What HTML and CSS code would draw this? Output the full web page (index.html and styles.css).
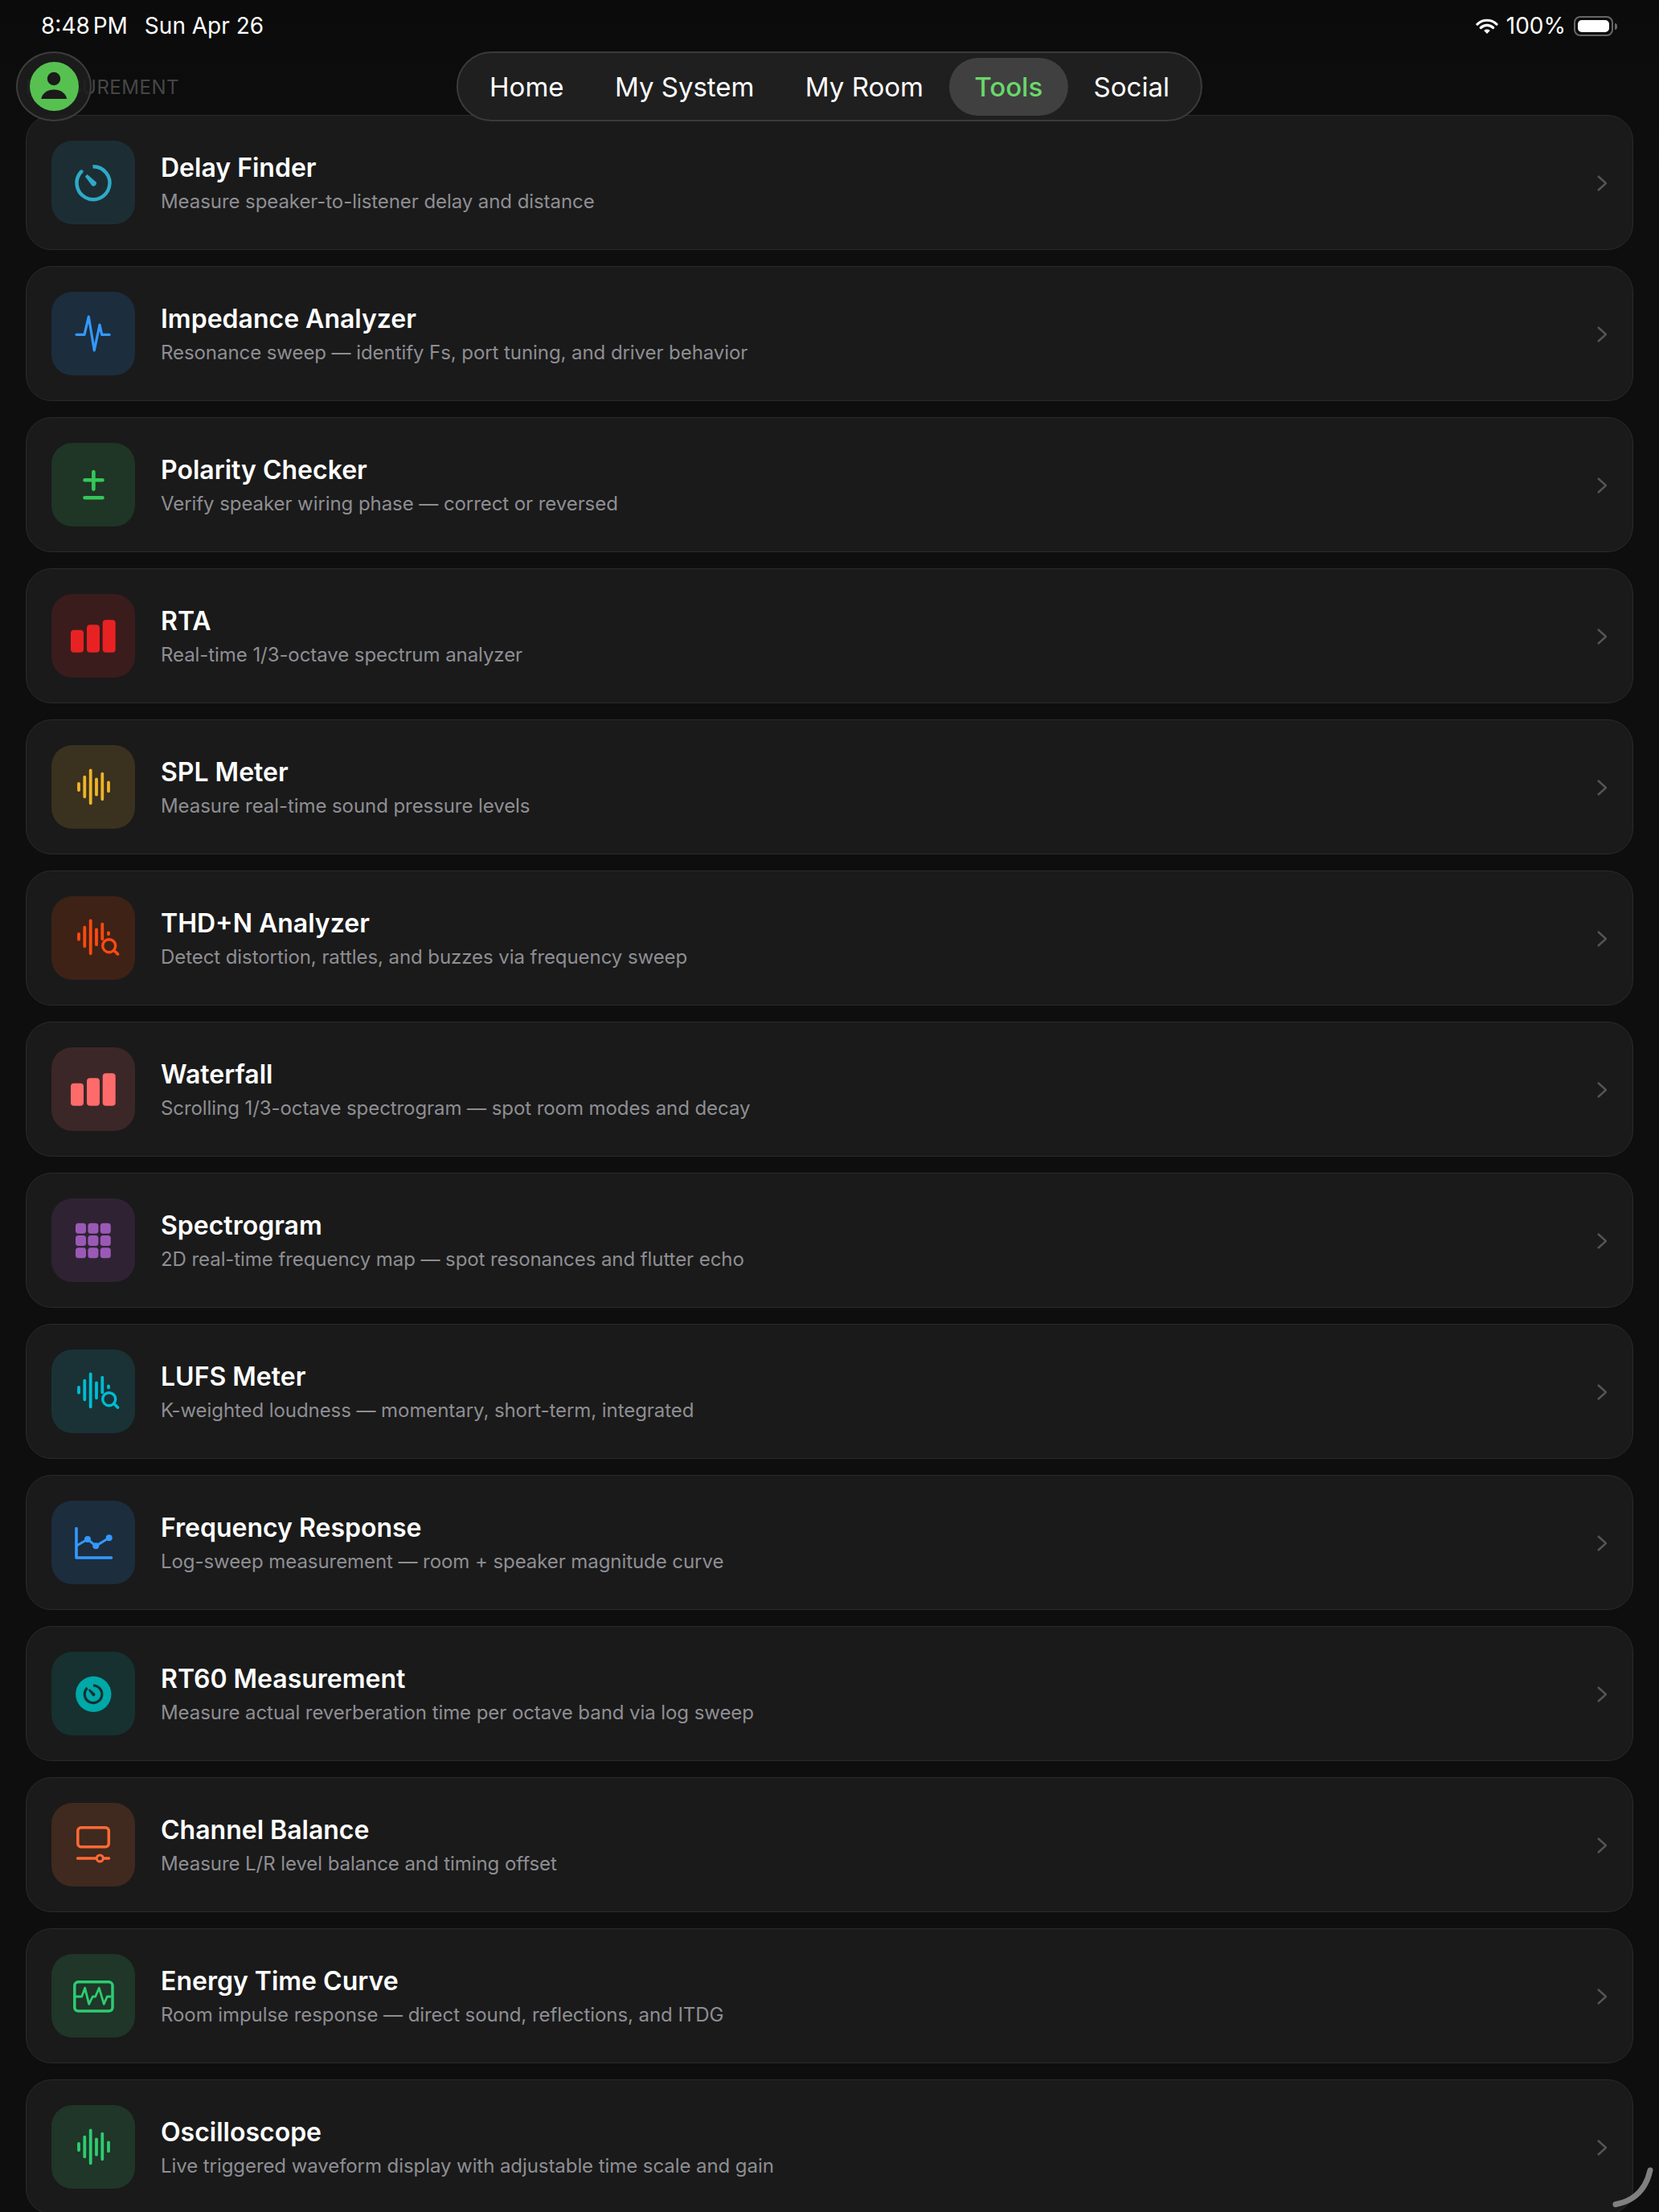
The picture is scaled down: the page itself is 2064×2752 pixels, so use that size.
FILE: index.html
```html
<!DOCTYPE html>
<html lang="en">
<head>
    <meta charset="UTF-8">
    <meta name="viewport" content="width=device-width, initial-scale=1.0">
    <title>Tools</title>
    <link rel="stylesheet" href="styles.css">
</head>
<body>
    <!-- shared icon shapes -->
    <svg class="icon-defs" aria-hidden="true">
        <symbol id="icon-bars" viewBox="0 0 104 104">
            <rect x="24" y="44.7" width="16" height="28" rx="4" fill="currentColor"/>
            <rect x="44" y="38.3" width="16" height="34.4" rx="4" fill="currentColor"/>
            <rect x="63.7" y="32.3" width="16" height="40.4" rx="4" fill="currentColor"/>
        </symbol>
        <symbol id="icon-wave" viewBox="0 0 104 104">
            <path d="M34 48v8M41.3 39.7v24.6M48.7 31.3v41M56 42.3v19.4M63.3 35.7v31.6M71 46.3v11" fill="none" stroke="currentColor" stroke-width="3.8" stroke-linecap="round"/>
        </symbol>
        <symbol id="icon-wave-search" viewBox="0 0 104 104">
            <path d="M34 47v6.7M41.3 38.7v23.6M48.7 30.3v41M56 41.3v19M63.3 34.7v18.6M71 45.3v2" fill="none" stroke="currentColor" stroke-width="3.8" stroke-linecap="round"/>
            <circle cx="71.7" cy="61.7" r="8" fill="none" stroke="currentColor" stroke-width="3.4"/>
            <path d="M77.6 67.3l5 4.8" fill="none" stroke="currentColor" stroke-width="3.6" stroke-linecap="round"/>
        </symbol>
    </svg>

    <div class="screen">
        <div class="status-bar">
            <div class="status-time"><span class="clock">8:48 PM</span><span>Sun Apr 26</span></div>
            <div class="status-right">
                <svg class="wifi" viewBox="0 0 28 19">
                    <path d="M2 7.2a17 17 0 0 1 24 0M6.3 11.5a11 11 0 0 1 15.4 0" fill="none" stroke="#fff" stroke-width="3.2" stroke-linecap="round"/>
                    <path d="M10.2 15a5.6 5.6 0 0 1 7.6 0L14 19z" fill="#fff"/>
                </svg>
                <span>100%</span>
                <div class="battery"><div class="battery-fill"></div></div>
            </div>
        </div>

        <div class="section-label">MEASUREMENT</div>

        <div class="tool-list">
            <div class="tool-card">
                <div class="tool-icon tone-delay">
                    <svg viewBox="0 0 104 104">
                        <path d="M51.5 32.2A20.5 20.5 0 1 1 37.3 38.4" fill="none" stroke="currentColor" stroke-width="4.4"/>
                        <path d="M37.3 38.4l.1 0" fill="none" stroke="currentColor" stroke-width="4.4" stroke-linecap="round"/>
                        <path d="M41.8 44.4L44.6 42L55.3 51.2A3.5 3.5 0 0 1 50.4 56Z" fill="currentColor"/>
                    </svg>
                </div>
                <div class="tool-text">
                    <div class="tool-name">Delay Finder</div>
                    <div class="tool-desc">Measure speaker-to-listener delay and distance</div>
                </div>
                <svg class="chevron" viewBox="0 0 12 20"><path d="M1 1l10 9-10 9"/></svg>
            </div>

            <div class="tool-card">
                <div class="tool-icon tone-blue">
                    <svg viewBox="0 0 104 104">
                        <path d="M31 53.3h10L46.3 31l7 42 6.7-32 2.7 12.3h9.5" fill="none" stroke="currentColor" stroke-width="3.2" stroke-linecap="round" stroke-linejoin="round"/>
                    </svg>
                </div>
                <div class="tool-text">
                    <div class="tool-name">Impedance Analyzer</div>
                    <div class="tool-desc">Resonance sweep — identify Fs, port tuning, and driver behavior</div>
                </div>
                <svg class="chevron" viewBox="0 0 12 20"><path d="M1 1l10 9-10 9"/></svg>
            </div>

            <div class="tool-card">
                <div class="tool-icon tone-polarity">
                    <svg viewBox="0 0 104 104">
                        <path d="M41.5 46.3h22M52.4 36v21.6M41.5 68.3h22" fill="none" stroke="currentColor" stroke-width="4.6" stroke-linecap="round"/>
                    </svg>
                </div>
                <div class="tool-text">
                    <div class="tool-name">Polarity Checker</div>
                    <div class="tool-desc">Verify speaker wiring phase — correct or reversed</div>
                </div>
                <svg class="chevron" viewBox="0 0 12 20"><path d="M1 1l10 9-10 9"/></svg>
            </div>

            <div class="tool-card">
                <div class="tool-icon tone-red">
                    <svg viewBox="0 0 104 104"><use href="#icon-bars"/></svg>
                </div>
                <div class="tool-text">
                    <div class="tool-name">RTA</div>
                    <div class="tool-desc">Real-time 1/3-octave spectrum analyzer</div>
                </div>
                <svg class="chevron" viewBox="0 0 12 20"><path d="M1 1l10 9-10 9"/></svg>
            </div>

            <div class="tool-card">
                <div class="tool-icon tone-yellow">
                    <svg viewBox="0 0 104 104"><use href="#icon-wave"/></svg>
                </div>
                <div class="tool-text">
                    <div class="tool-name">SPL Meter</div>
                    <div class="tool-desc">Measure real-time sound pressure levels</div>
                </div>
                <svg class="chevron" viewBox="0 0 12 20"><path d="M1 1l10 9-10 9"/></svg>
            </div>

            <div class="tool-card">
                <div class="tool-icon tone-thd">
                    <svg viewBox="0 0 104 104"><use href="#icon-wave-search"/></svg>
                </div>
                <div class="tool-text">
                    <div class="tool-name">THD+N Analyzer</div>
                    <div class="tool-desc">Detect distortion, rattles, and buzzes via frequency sweep</div>
                </div>
                <svg class="chevron" viewBox="0 0 12 20"><path d="M1 1l10 9-10 9"/></svg>
            </div>

            <div class="tool-card">
                <div class="tool-icon tone-coral">
                    <svg viewBox="0 0 104 104"><use href="#icon-bars"/></svg>
                </div>
                <div class="tool-text">
                    <div class="tool-name">Waterfall</div>
                    <div class="tool-desc">Scrolling 1/3-octave spectrogram — spot room modes and decay</div>
                </div>
                <svg class="chevron" viewBox="0 0 12 20"><path d="M1 1l10 9-10 9"/></svg>
            </div>

            <div class="tool-card">
                <div class="tool-icon tone-purple">
                    <svg viewBox="0 0 104 104">
                        <g fill="currentColor">
                            <rect x="30" y="30.7" width="13" height="13" rx="3.5"/>
                            <rect x="45.4" y="30.7" width="13" height="13" rx="3.5"/>
                            <rect x="60.8" y="30.7" width="13" height="13" rx="3.5"/>
                            <rect x="30" y="46" width="13" height="13" rx="3.5"/>
                            <rect x="45.4" y="46" width="13" height="13" rx="3.5"/>
                            <rect x="60.8" y="46" width="13" height="13" rx="3.5"/>
                            <rect x="30" y="61.3" width="13" height="13" rx="3.5"/>
                            <rect x="45.4" y="61.3" width="13" height="13" rx="3.5"/>
                            <rect x="60.8" y="61.3" width="13" height="13" rx="3.5"/>
                        </g>
                    </svg>
                </div>
                <div class="tool-text">
                    <div class="tool-name">Spectrogram</div>
                    <div class="tool-desc">2D real-time frequency map — spot resonances and flutter echo</div>
                </div>
                <svg class="chevron" viewBox="0 0 12 20"><path d="M1 1l10 9-10 9"/></svg>
            </div>

            <div class="tool-card">
                <div class="tool-icon tone-cyan">
                    <svg viewBox="0 0 104 104"><use href="#icon-wave-search"/></svg>
                </div>
                <div class="tool-text">
                    <div class="tool-name">LUFS Meter</div>
                    <div class="tool-desc">K-weighted loudness — momentary, short-term, integrated</div>
                </div>
                <svg class="chevron" viewBox="0 0 12 20"><path d="M1 1l10 9-10 9"/></svg>
            </div>

            <div class="tool-card">
                <div class="tool-icon tone-blue">
                    <svg viewBox="0 0 104 104">
                        <path d="M31 34.5V71h43.5" fill="none" stroke="currentColor" stroke-width="3.6" stroke-linecap="round" stroke-linejoin="round"/>
                        <path d="M31 56.3L45 48l10.3 8.3 16.4-10" fill="none" stroke="currentColor" stroke-width="3"/>
                        <circle cx="45" cy="48" r="4" fill="currentColor"/>
                        <circle cx="55.3" cy="56.3" r="4" fill="currentColor"/>
                        <circle cx="71.7" cy="46.3" r="4" fill="currentColor"/>
                    </svg>
                </div>
                <div class="tool-text">
                    <div class="tool-name">Frequency Response</div>
                    <div class="tool-desc">Log-sweep measurement — room + speaker magnitude curve</div>
                </div>
                <svg class="chevron" viewBox="0 0 12 20"><path d="M1 1l10 9-10 9"/></svg>
            </div>

            <div class="tool-card">
                <div class="tool-icon tone-teal">
                    <svg viewBox="0 0 104 104">
                        <circle cx="52.3" cy="52.7" r="22.2" fill="currentColor"/>
                        <path d="M52 42A10.8 10.8 0 1 1 44.6 45" fill="none" stroke="#143030" stroke-width="3.2"/>
                        <path d="M45.8 47.8L47.6 46.2L54.4 52.2A2.2 2.2 0 0 1 51.4 55Z" fill="#143030"/>
                    </svg>
                </div>
                <div class="tool-text">
                    <div class="tool-name">RT60 Measurement</div>
                    <div class="tool-desc">Measure actual reverberation time per octave band via log sweep</div>
                </div>
                <svg class="chevron" viewBox="0 0 12 20"><path d="M1 1l10 9-10 9"/></svg>
            </div>

            <div class="tool-card">
                <div class="tool-icon tone-orange">
                    <svg viewBox="0 0 104 104">
                        <rect x="32.8" y="30.8" width="38.5" height="24" rx="4" fill="none" stroke="currentColor" stroke-width="3.5"/>
                        <path d="M32.5 69h39" fill="none" stroke="currentColor" stroke-width="3.4" stroke-linecap="round"/>
                        <circle cx="60.3" cy="69" r="4" fill="#40291f" stroke="currentColor" stroke-width="3"/>
                    </svg>
                </div>
                <div class="tool-text">
                    <div class="tool-name">Channel Balance</div>
                    <div class="tool-desc">Measure L/R level balance and timing offset</div>
                </div>
                <svg class="chevron" viewBox="0 0 12 20"><path d="M1 1l10 9-10 9"/></svg>
            </div>

            <div class="tool-card">
                <div class="tool-icon tone-green">
                    <svg viewBox="0 0 104 104">
                        <rect x="28.8" y="34.8" width="47.2" height="36.2" rx="4.5" fill="none" stroke="currentColor" stroke-width="3.5"/>
                        <path d="M30 53h7.7l4-10.7 5 20 4.6-9.3h3.4l4.6-10.7 6 20 4-9.3h5" fill="none" stroke="currentColor" stroke-width="2.8" stroke-linejoin="round"/>
                    </svg>
                </div>
                <div class="tool-text">
                    <div class="tool-name">Energy Time Curve</div>
                    <div class="tool-desc">Room impulse response — direct sound, reflections, and ITDG</div>
                </div>
                <svg class="chevron" viewBox="0 0 12 20"><path d="M1 1l10 9-10 9"/></svg>
            </div>

            <div class="tool-card">
                <div class="tool-icon tone-green">
                    <svg viewBox="0 0 104 104"><use href="#icon-wave"/></svg>
                </div>
                <div class="tool-text">
                    <div class="tool-name">Oscilloscope</div>
                    <div class="tool-desc">Live triggered waveform display with adjustable time scale and gain</div>
                </div>
                <svg class="chevron" viewBox="0 0 12 20"><path d="M1 1l10 9-10 9"/></svg>
            </div>
        </div>

        <!-- floating bits over the list -->
        <div class="avatar">
            <svg viewBox="0 0 61 61">
                <circle cx="30.5" cy="30.5" r="30.5" fill="#56c150"/>
                <circle cx="30" cy="21" r="8.2" fill="#1a1a1a"/>
                <path d="M14.3 46a16 13 0 0 1 31.8 0z" fill="#1a1a1a"/>
            </svg>
        </div>

        <nav class="top-nav">
            <a class="nav-item">Home</a>
            <a class="nav-item">My System</a>
            <a class="nav-item">My Room</a>
            <a class="nav-item active">Tools</a>
            <a class="nav-item">Social</a>
        </nav>

        <svg class="corner-grip" viewBox="0 0 54 52">
            <path d="M4 47.5Q39 41 47 5" fill="none" stroke="#808080" stroke-width="7" stroke-linecap="round"/>
        </svg>
    </div>
</body>
</html>
```

FILE: styles.css
```css
* {
    box-sizing: border-box;
}
html, body {
    margin: 0;
    height: 2752px;
    overflow: hidden;
}
body {
    font-family: Inter, "Noto Sans", sans-serif;
    background-color: #0e0e0e;
    color: #fff;
}
.icon-defs {
    display: none;
}
.screen {
    position: relative;
    height: 2752px;
    overflow: hidden;
    background: linear-gradient(#0b0b0b, #0e0e0e 220px);
}

/* status bar */
.status-bar {
    height: 64px;
    padding: 12px 52px 0 51px;
    display: flex;
    justify-content: space-between;
    align-items: flex-start;
    font-size: 28px;
    line-height: 40px;
}
.status-time {
    display: flex;
    gap: 21px;
}
.clock {
    word-spacing: -4px;
}
.status-right {
    display: flex;
    align-items: center;
    gap: 10px;
}
.wifi {
    width: 28px;
    height: 19px;
}
.battery {
    position: relative;
    width: 49px;
    height: 25px;
    margin-right: 5px;
    padding: 3px;
    border: 2px solid #666;
    border-radius: 8px;
}
.battery::after {
    content: "";
    position: absolute;
    top: 7px;
    right: -7px;
    width: 3px;
    height: 8px;
    background: #666;
    border-radius: 0 3px 3px 0;
}
.battery-fill {
    height: 100%;
    background: #fff;
    border-radius: 5px;
}

.section-label {
    height: 79px;
    padding-left: 32px;
    font-size: 24px;
    letter-spacing: 0.5px;
    line-height: 89px;
    color: #464646;
}

/* tool rows */
.tool-list {
    display: flex;
    flex-direction: column;
    gap: 20px;
    padding: 0 32px;
}
.tool-card {
    flex: none;
    height: 168px;
    padding: 0 32px 0 31px;
    display: flex;
    align-items: center;
    gap: 32px;
    background: #1a1a1a;
    border: 1.5px solid #2a2a2a;
    border-radius: 32px;
}
.tool-icon {
    flex: none;
    width: 104px;
    height: 104px;
    border-radius: 26px;
}
.tool-icon svg {
    display: block;
    width: 104px;
    height: 104px;
}
.tool-text {
    flex: 1;
    min-width: 0;
    padding-top: 1px;
}
.tool-name {
    font-size: 32px;
    line-height: 42px;
    font-weight: 600;
    color: #fff;
}
.tool-desc {
    margin-top: 4px;
    font-size: 24px;
    letter-spacing: -0.07px;
    line-height: 34px;
    color: #8e8e93;
}
.chevron {
    flex: none;
    width: 12px;
    height: 20px;
    margin-top: 2px;
    fill: none;
    stroke: #555;
    stroke-width: 2.4;
}

/* icon colours */
.tone-delay { color: #2eaac8; background: #1c2e33; }
.tone-blue { color: #3399ff; background: #1c2d3d; }
.tone-polarity { color: #34c759; background: #1f3525; }
.tone-red { color: #e82222; background: #3a1c1c; }
.tone-yellow { color: #f0b429; background: #3a311f; }
.tone-thd { color: #ff4a12; background: #3e2216; }
.tone-coral { color: #ff6b6b; background: #3c2728; }
.tone-purple { color: #9b59b6; background: #2f2333; }
.tone-cyan { color: #00bcd4; background: #1a3236; }
.tone-teal { color: #00a8a8; background: #163130; }
.tone-orange { color: #ff6b35; background: #40291f; }
.tone-green { color: #2ecc71; background: #1f3628; }

/* floating elements */
.avatar {
    position: absolute;
    top: 64px;
    left: 20px;
    width: 94px;
    height: 87px;
    display: flex;
    align-items: center;
    justify-content: center;
    background: rgba(30, 30, 30, 0.88);
    border: 2px solid #3c3c3c;
    border-radius: 50%;
}
.avatar svg {
    width: 61px;
    height: 61px;
}
.top-nav {
    position: absolute;
    top: 64px;
    left: 50%;
    transform: translateX(-50%);
    height: 87px;
    padding: 0 8px;
    display: flex;
    align-items: center;
    gap: 1px;
    background: #1f1f1f;
    border: 2px solid #3a3a3a;
    border-radius: 44px;
}
.nav-item {
    height: 72px;
    padding: 0 31.2px;
    border-radius: 36px;
    font-size: 33px;
    line-height: 72px;
    color: #fff;
}
.nav-item.active {
    background: #404040;
    color: #6ad86a;
    font-weight: 500;
}
.corner-grip {
    position: absolute;
    top: 2695px;
    left: 2006px;
    width: 54px;
    height: 52px;
}
```
